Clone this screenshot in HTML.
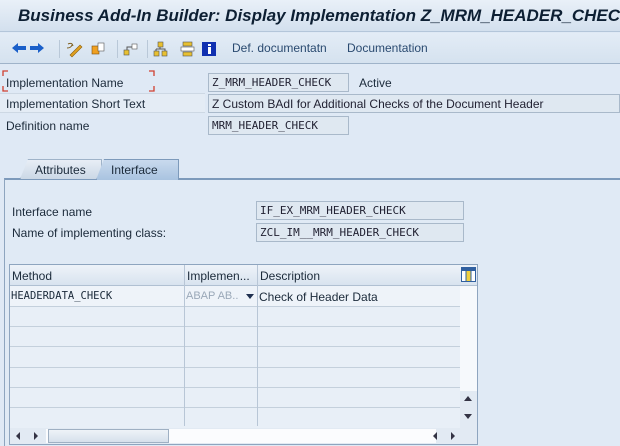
<!DOCTYPE html>
<html><head><meta charset="utf-8"><style>
*{margin:0;padding:0;box-sizing:border-box}
body{width:620px;height:446px;overflow:hidden;background:#dfe9f5;font-family:"Liberation Sans",sans-serif;font-size:12px;color:#1b2a3a;position:relative}
.abs{position:absolute}
.title{left:0;top:0;width:620px;height:32px;background:linear-gradient(#e9f0f8,#d3e0ee);border-bottom:1px solid #b4c6da;overflow:hidden}
.title span{position:absolute;left:18px;top:6px;font-family:"Liberation Sans",sans-serif;font-weight:bold;font-style:italic;font-size:17px;color:#0d1f33;white-space:nowrap}
.tb{left:0;top:33px;width:620px;height:31px;background:linear-gradient(#e3ecf6,#d5e2ef);border-bottom:1px solid #9fb3c9}
.lbl{font-size:12px;color:#1b2a3a;white-space:nowrap}
.fld{background:#dfe8f1;border:1px solid #a9b9ca;font-family:"DejaVu Sans Mono","Liberation Mono",monospace;font-size:11px;padding:2px 3px;white-space:nowrap;color:#223;overflow:hidden}
.sep{width:1px;height:18px;background:#b9c8d8}
.tab{height:20px;top:159px;font-size:12px;padding-top:3px}
.grid{left:9px;top:264px;width:469px;height:181px;border:1px solid #8ea5bf;background:#e8eff7}
.hl{position:absolute;left:0;width:450px;height:1px;background:#c4d0dc}
</style></head><body>
<div class="abs title"><span>Business Add-In Builder: Display Implementation Z_MRM_HEADER_CHECK</span></div>
<div class="abs tb">
<svg class="abs" style="left:10px;top:7px" width="220" height="18" viewBox="0 0 220 18">
<path d="M2 8 L8 3 L8 6 L16 6 L16 10 L8 10 L8 13 Z" fill="#1a5fc9"/>
<path d="M34 8 L28 3 L28 6 L20 6 L20 10 L28 10 L28 13 Z" fill="#1a5fc9"/>
<path d="M60 15 L70 5 L72 7 L62 17 Z" fill="#e0a020" stroke="#8a6010" stroke-width=".6"/>
<path d="M58 4 Q62 2 63 6 M57 8 Q61 8 62 5" stroke="#806020" fill="none"/>
<rect x="82" y="6" width="7" height="8" fill="#f0a020" stroke="#805010" stroke-width=".6"/>
<rect x="88" y="3" width="6" height="8" fill="#fff" stroke="#555" stroke-width=".6"/>
<rect x="114" y="10" width="5" height="5" fill="#e8c030" stroke="#555" stroke-width=".6"/>
<rect x="122" y="4" width="5" height="5" fill="#fff" stroke="#555" stroke-width=".6"/>
<path d="M117 10 L117 7 L122 7" stroke="#555" fill="none"/>
<rect x="148" y="2" width="5" height="5" fill="#e8c030" stroke="#555" stroke-width=".6"/>
<rect x="144" y="11" width="5" height="5" fill="#e8c030" stroke="#555" stroke-width=".6"/>
<rect x="152" y="11" width="5" height="5" fill="#e8c030" stroke="#555" stroke-width=".6"/>
<path d="M150 7 V9 M146 9 H155 V11 M146 9 V11" stroke="#555" fill="none"/>
<rect x="173" y="2" width="9" height="4" fill="#e8c030" stroke="#555" stroke-width=".6"/>
<rect x="171" y="7" width="13" height="4" fill="#fff" stroke="#555" stroke-width=".6"/>
<rect x="173" y="12" width="9" height="4" fill="#e8c030" stroke="#555" stroke-width=".6"/>
<rect x="192" y="2" width="14" height="14" fill="#1030b0"/>
<rect x="198" y="4" width="3" height="2" fill="#fff"/><rect x="198" y="7" width="3" height="7" fill="#fff"/>
</svg>
<div class="abs sep" style="left:59px;top:7px"></div>
<div class="abs sep" style="left:117px;top:7px"></div>
<div class="abs sep" style="left:147px;top:7px"></div>
<div class="abs lbl" style="left:232px;top:8px;color:#2a4a70">Def. documentatn</div>
<div class="abs lbl" style="left:347px;top:8px;color:#2a4a70">Documentation</div>
</div>
<svg class="abs" style="left:2px;top:70px" width="154" height="22"><path d="M1 6 V1 H6 M147 1 H152 V6 M1 16 V21 H6 M147 21 H152 V16" stroke="#d04030" stroke-width="1.3" fill="none"/></svg>
<div class="abs lbl" style="left:6px;top:76px">Implementation Name</div>
<div class="abs fld" style="left:208px;top:73px;width:141px;height:19px">Z_MRM_HEADER_CHECK</div>
<div class="abs lbl" style="left:359px;top:76px">Active</div>
<div class="abs" style="left:0;top:93px;width:205px;height:20px;background:#e4ecf5;border-top:1px solid #cdd8e4;border-bottom:1px solid #cdd8e4"></div>
<div class="abs lbl" style="left:6px;top:97px">Implementation Short Text</div>
<div class="abs fld" style="left:208px;top:94px;width:412px;height:19px;font-family:'Liberation Sans',sans-serif;font-size:12px;padding-top:2px">Z Custom BAdI for Additional Checks of the Document Header</div>
<div class="abs lbl" style="left:6px;top:119px">Definition name</div>
<div class="abs fld" style="left:208px;top:116px;width:141px;height:19px">MRM_HEADER_CHECK</div>

<div class="abs" style="left:4px;top:178px;width:616px;height:268px;border-left:1px solid #8ea5bf;border-top:2px solid #7d9abb;background:#e0eaf5"></div>
<div class="abs tab" style="left:20px;width:82px;background:linear-gradient(#e8eef6,#cbd8e6);border:1px solid #9fb3c9;border-bottom:none;clip-path:polygon(8px 0,100% 0,100% 100%,0 100%);padding-left:14px">Attributes</div>
<div class="abs tab" style="left:96px;width:83px;background:linear-gradient(#c9daee,#a9c3e0);border:1px solid #7d9abb;border-bottom:none;clip-path:polygon(8px 0,100% 0,100% 100%,0 100%);padding-left:14px;height:21px">Interface</div>

<div class="abs lbl" style="left:12px;top:205px">Interface name</div>
<div class="abs fld" style="left:256px;top:201px;width:208px;height:19px">IF_EX_MRM_HEADER_CHECK</div>
<div class="abs lbl" style="left:12px;top:226px">Name of implementing class:</div>
<div class="abs fld" style="left:256px;top:223px;width:208px;height:19px">ZCL_IM__MRM_HEADER_CHECK</div>

<div class="abs grid">
<div class="abs" style="left:0;top:0;width:467px;height:21px;background:linear-gradient(#eef3f9,#d8e3ef);border-bottom:1px solid #b0c0d2"></div>
<div class="abs lbl" style="left:2px;top:4px">Method</div>
<div class="abs lbl" style="left:177px;top:4px">Implemen...</div>
<div class="abs lbl" style="left:250px;top:4px">Description</div>
<svg class="abs" style="left:451px;top:2px" width="15" height="15"><rect x=".5" y=".5" width="14" height="14" fill="#fff" stroke="#3060a0"/><rect x="1" y="1" width="13" height="3" fill="#3060a0"/><rect x="5" y="4" width="5" height="10" fill="#f0d040"/><path d="M5 4V14M10 4V14" stroke="#3060a0"/></svg>
<div class="abs" style="left:0;top:21px;width:450px;height:20px;background:#eef3f9"></div>
<div class="abs" style="left:0;top:21px;font-family:'DejaVu Sans Mono',monospace;font-size:10.5px;padding:4px 1px">HEADERDATA_CHECK</div>
<div class="abs lbl" style="left:176px;top:25px;color:#9aa8b8;font-size:11px">ABAP AB..</div>
<div class="abs" style="left:236px;top:29px;border:4px solid transparent;border-top:5px solid #203050"></div>
<div class="abs lbl" style="left:249px;top:25px">Check of Header Data</div>
<div class="hl" style="top:41px"></div><div class="hl" style="top:61px"></div><div class="hl" style="top:81px"></div><div class="hl" style="top:102px"></div><div class="hl" style="top:122px"></div><div class="hl" style="top:142px"></div>
<div class="abs" style="left:174px;top:0;width:1px;height:161px;background:#b8c6d6"></div>
<div class="abs" style="left:247px;top:0;width:1px;height:161px;background:#b8c6d6"></div>
<div class="abs" style="left:450px;top:21px;width:17px;height:142px;background:#f6f9fc"></div>
<div class="abs" style="left:450px;top:126px;width:17px;height:37px;background:#e2eaf3"></div>
<div class="abs" style="left:454px;top:131px;border:4px solid transparent;border-bottom:5px solid #334;border-top:none"></div>
<div class="abs" style="left:454px;top:149px;border:4px solid transparent;border-top:5px solid #334;border-bottom:none"></div>
<div class="abs" style="left:0;top:163px;width:467px;height:16px;background:#e2eaf3"></div>
<div class="abs" style="left:36px;top:164px;width:390px;height:14px;background:#fbfcfe"></div>
<div class="abs" style="left:38px;top:164px;width:121px;height:14px;background:linear-gradient(#eef3f8,#d6e0eb);border:1px solid #9fb0c3"></div>
<div class="abs" style="left:6px;top:167px;border:4px solid transparent;border-right:4px solid #334;border-left:none"></div>
<div class="abs" style="left:24px;top:167px;border:4px solid transparent;border-left:4px solid #334;border-right:none"></div>
<div class="abs" style="left:423px;top:167px;border:4px solid transparent;border-right:4px solid #334;border-left:none"></div>
<div class="abs" style="left:441px;top:167px;border:4px solid transparent;border-left:4px solid #334;border-right:none"></div>
</div>
</body></html>
